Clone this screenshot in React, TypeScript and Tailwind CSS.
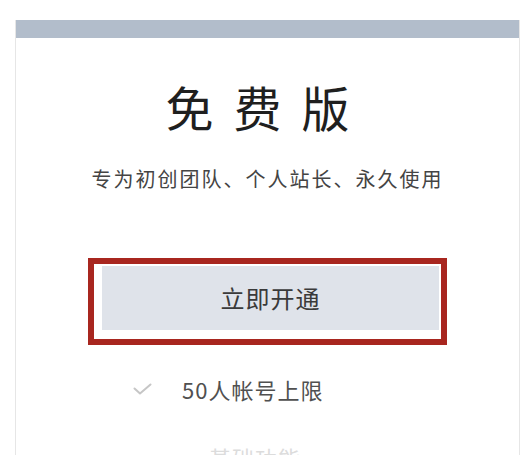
const features = [
  { label: '50人帐号上限', checked: true },
];

const Check = () => (
  <svg width="19" height="12" viewBox="0 0 19 12" fill="none" aria-hidden="true">
    <polyline
      points="1.5,5.5 7,10.5 17.5,1.5"
      stroke="#c6c6c6"
      strokeWidth="2"
      strokeLinecap="round"
      strokeLinejoin="round"
    />
  </svg>
);

export default function App() {
  return (
    <div className="h-[455px] overflow-hidden bg-white pt-[20px] pl-[15px] font-['Noto_Sans_CJK_SC','Noto_Sans',sans-serif]">
      <div className="h-[440px] w-[505px] border-x border-[#e6e6e6]">
        {/* Plan header strip */}
        <div className="h-[18px] bg-[#b2bdcb]" />

        <div className="flex flex-col items-center">
          <h1 className="mt-[44px] text-[48px] leading-none tracking-[20px] text-[#1f1f1f]">
            免费版
          </h1>
          <p className="mt-[39px] text-[20px] leading-none tracking-[2px] text-[#444]">
            专为初创团队、个人站长、永久使用
          </p>

          {/* Highlighted call to action */}
          <div className="mt-[69px] w-[359px] border-[6px] border-[#a8261f] pt-[2px] pr-[2px] pb-[9px] pl-[8px]">
            <button className="flex h-[64px] w-full items-center justify-center bg-[#dfe3ea] text-[24px] leading-none tracking-[1px] text-[#3a3a3a]">
              立即开通
            </button>
          </div>
        </div>

        <ul className="mt-[33px]">
          {features.map((f) => (
            <li key={f.label} className="flex items-center pl-[117px]">
              <Check />
              <span className="ml-[30px] text-[22px] leading-none tracking-[1px] text-[#505050]">
                {f.label}
              </span>
            </li>
          ))}
          <li className="mt-[46px] pl-[193px] text-[22px] leading-none tracking-[1px] text-[#dcdcdc]">
            基础功能
          </li>
        </ul>
      </div>
    </div>
  );
}
